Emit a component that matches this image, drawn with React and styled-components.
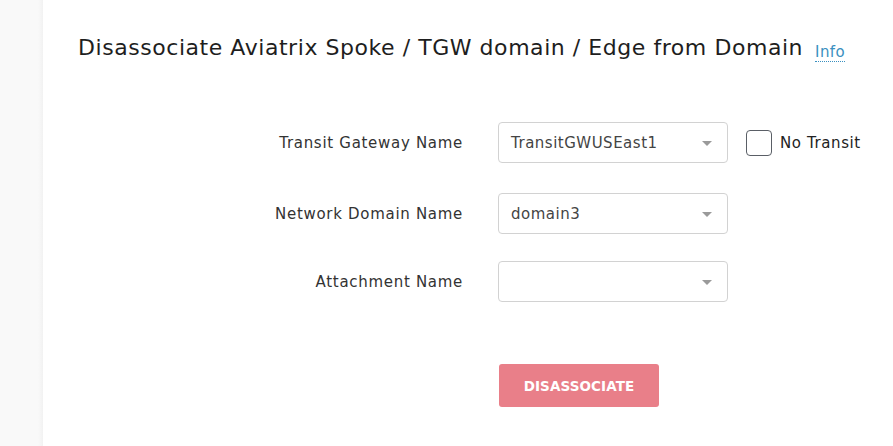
import React from "react";
import styled, { createGlobalStyle } from "styled-components";

const Global = createGlobalStyle`
  html, body { margin: 0; padding: 0; background: #fff; }
  body { font-family: "DejaVu Sans", "Open Sans", sans-serif; color: #222; }
  * { box-sizing: border-box; }
`;

const Page = styled.div`
  display: flex;
  width: 893px;
  height: 446px;
  overflow: hidden;
`;

const Sidebar = styled.aside`
  width: 43px;
  flex: none;
  background: linear-gradient(to right, #f9f9f9 0, #f9f9f9 38px, #f2f2f2 43px);
`;

const Main = styled.main`
  flex: 1;
  display: flex;
  flex-direction: column;
  padding-top: 33px;
`;

const TitleRow = styled.div`
  display: flex;
  align-items: flex-end;
  gap: 12px;
  padding-left: 35px;
`;

const Title = styled.h1`
  margin: 0;
  font-size: 22px;
  font-weight: 400;
  letter-spacing: 0.55px;
  line-height: 30px;
  color: #1e1e1e;
`;

const InfoLink = styled.a`
  margin-bottom: 1px;
  font-size: 15px;
  color: #3a90c0;
  text-decoration: none;
  border-bottom: 1px dotted #3a90c0;
  line-height: 17px;
  letter-spacing: 0.4px;
`;

const Form = styled.form`
  display: grid;
  grid-template-columns: 420px 230px auto;
  column-gap: 35px;
  margin-top: 59px;
  align-items: center;
`;

const Label = styled.label`
  text-align: right;
  font-size: 15px;
  letter-spacing: 0.7px;
  color: #333;
`;

const Row = styled.div`
  display: contents;
`;

const Spacer = styled.div`
  grid-column: 1 / -1;
  height: ${(p) => p.h}px;
`;

const SelectBox = styled.div`
  position: relative;
  height: 41px;
  border: 1px solid #d2d2d2;
  border-radius: 4px;
  display: flex;
  align-items: center;
  padding-left: 12px;
  font-size: 15px;
  letter-spacing: 0.5px;
  color: #444;
  background: #fff;
`;

const Caret = styled.span`
  position: absolute;
  right: 15px;
  top: 50%;
  margin-top: -2px;
  width: 0;
  height: 0;
  border-left: 5px solid transparent;
  border-right: 5px solid transparent;
  border-top: 5px solid #9a9a9a;
`;

const CheckLabel = styled.label`
  display: flex;
  align-items: center;
  gap: 8px;
  margin-left: -17px;
  font-size: 15px;
  letter-spacing: 0.6px;
  color: #222;
`;

const Box = styled.span`
  width: 26px;
  height: 26px;
  border: 1px solid #5a5f66;
  border-radius: 4px;
  background: #fff;
`;

const Button = styled.button`
  grid-column: 2;
  justify-self: start;
  margin-left: 1px;
  width: 160px;
  height: 43px;
  border: none;
  border-radius: 3px;
  background: #e97f89;
  color: #fff;
  font-family: inherit;
  font-size: 13.5px;
  font-weight: 700;
  letter-spacing: 0.1px;
`;

function Select({ value }) {
  return (
    <SelectBox>
      {value}
      <Caret />
    </SelectBox>
  );
}

export default function App() {
  return (
    <Page>
      <Global />
      <Sidebar />
      <Main>
        <TitleRow>
          <Title>Disassociate Aviatrix Spoke / TGW domain / Edge from Domain</Title>
          <InfoLink href="#">Info</InfoLink>
        </TitleRow>
        <Form onSubmit={(e) => e.preventDefault()}>
          <Row>
            <Label>Transit Gateway Name</Label>
            <Select value="TransitGWUSEast1" />
            <CheckLabel>
              <Box />
              No Transit
            </CheckLabel>
          </Row>
          <Spacer h={30} />
          <Row>
            <Label>Network Domain Name</Label>
            <Select value="domain3" />
            <div />
          </Row>
          <Spacer h={27} />
          <Row>
            <Label>Attachment Name</Label>
            <Select value="" />
            <div />
          </Row>
          <Spacer h={62} />
          <Button type="button">DISASSOCIATE</Button>
        </Form>
      </Main>
    </Page>
  );
}
